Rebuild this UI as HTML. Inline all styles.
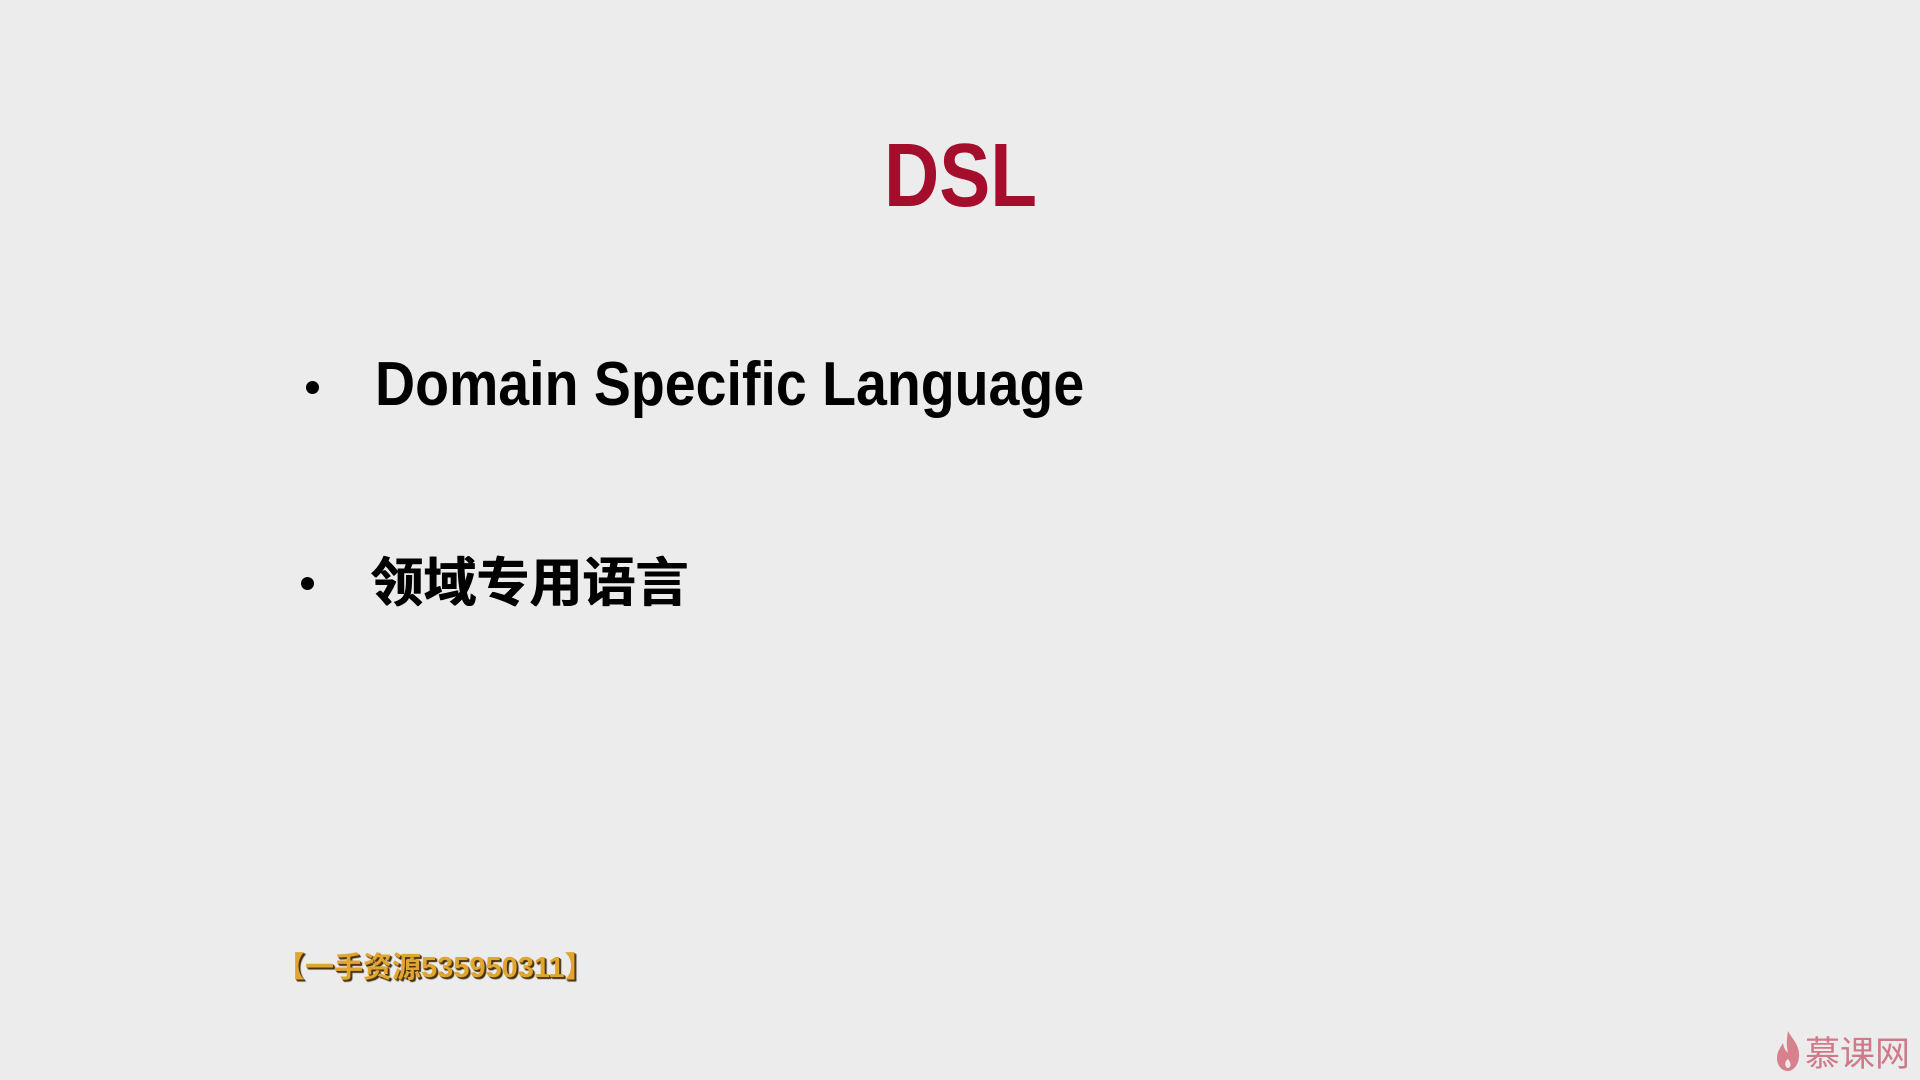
<!DOCTYPE html>
<html><head><meta charset="utf-8"><style>
html,body{margin:0;padding:0;width:1920px;height:1080px;background:#ececec;overflow:hidden;position:relative}
.t{position:absolute;white-space:nowrap;line-height:1}
#dsl{left:884px;top:125px;font:bold 90px "Liberation Sans",sans-serif;color:#a50d2d;transform:scaleX(.85);transform-origin:left top}
#l1{left:375px;top:349px;font:bold 62px "Liberation Sans",sans-serif;color:#000;transform:scaleX(.895);transform-origin:left top}
.b{position:absolute;width:13px;height:13px;border-radius:50%;background:#000}
#l2{left:370px;top:541px;font:bold 53px "Liberation Sans","Noto Sans CJK SC",sans-serif;color:#000;text-shadow:1px 0 0 #000}
#wm{left:276px;top:944px;font:bold 29px "Liberation Sans","Noto Sans CJK SC",sans-serif;color:#e0a632;text-shadow:1px 1px 0 #5a3a08,2px 2px 1px #3a2505;letter-spacing:0}
#logo{left:1805px;top:1026px;font:35px "Liberation Sans","Noto Sans CJK SC",sans-serif;color:#cf7a88}
</style></head><body>
<div class="t" id="dsl">DSL</div>
<div class="b" style="left:306px;top:381px"></div>
<div class="t" id="l1">Domain Specific Language</div>
<div class="b" style="left:301px;top:577px"></div>
<div class="t" id="l2">领域专用语言</div>
<div class="t" id="wm">【一手资源535950311】</div>
<svg style="position:absolute;left:1774px;top:1028px" width="28" height="46" viewBox="0 0 28 44"><path d="M14 2 C18 10 26 16 25 28 C24 38 18 42 14 42 C8 42 3 37 3 29 C3 22 7 18 9 14 C10 20 12 22 14 24 C12 16 13 8 14 2 Z M14 30 C11 32 10 36 13 39 C17 39 18 35 14 30Z" fill="#d9808e" fill-rule="evenodd"/></svg>
<div class="t" id="logo">慕课网</div>
</body></html>
